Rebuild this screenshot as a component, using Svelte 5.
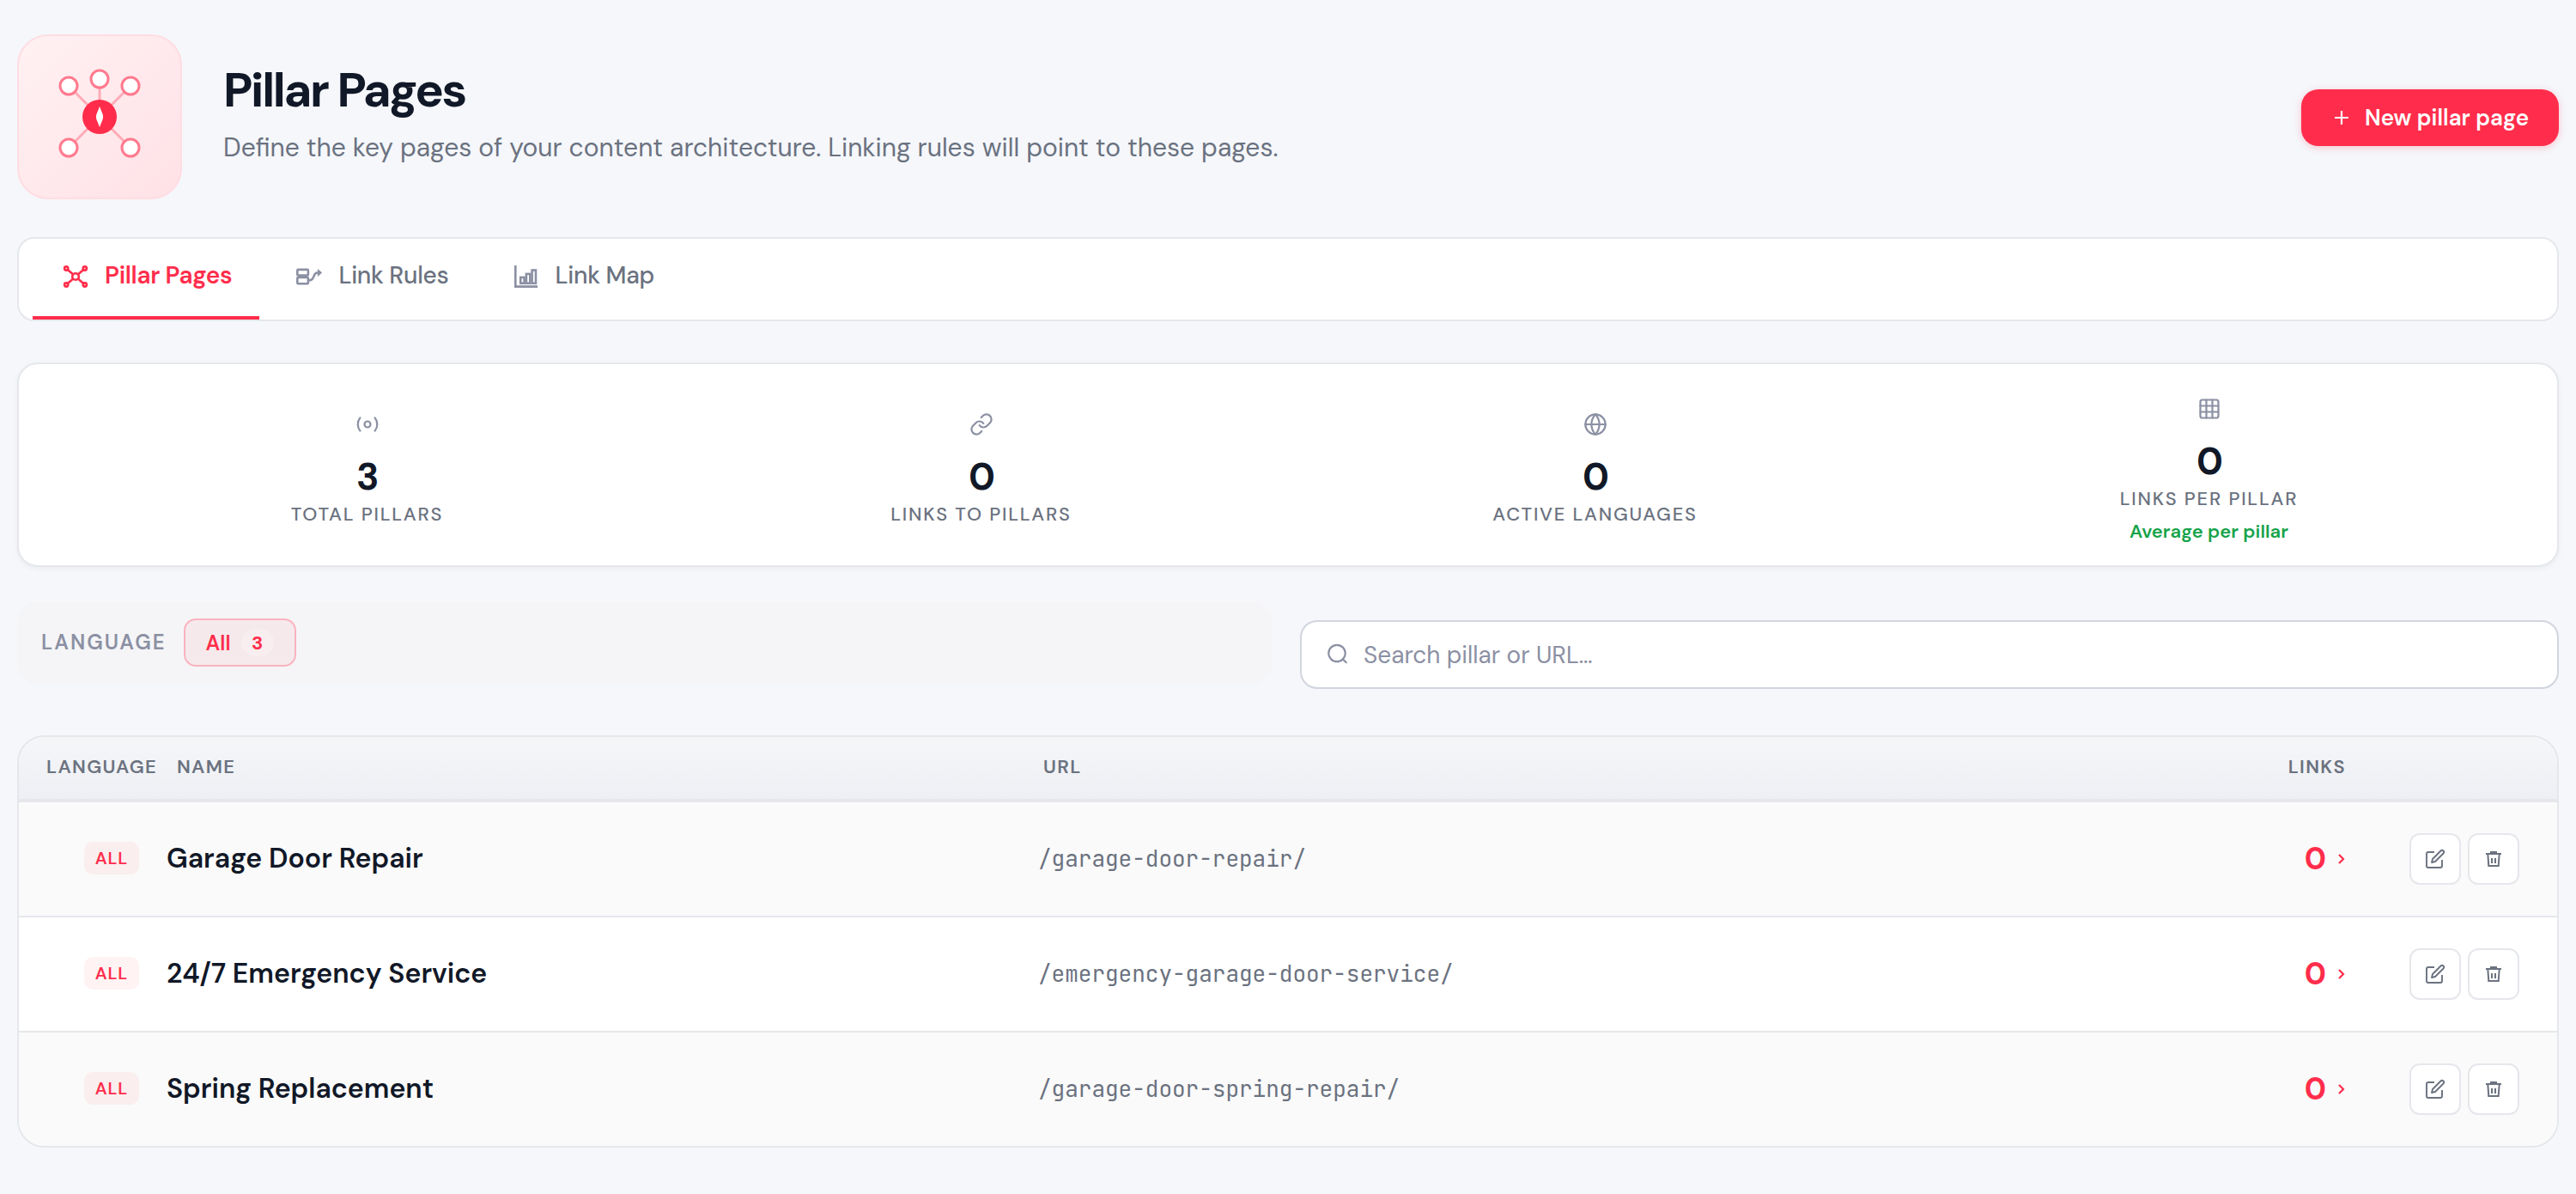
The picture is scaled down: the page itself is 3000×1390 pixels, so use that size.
<script>
  const tabs = [
    { label: 'Pillar Pages', icon: 'hub', active: true },
    { label: 'Link Rules', icon: 'rules', active: false },
    { label: 'Link Map', icon: 'chart', active: false }
  ];
  const stats = [
    { icon: 'radio', value: '3', label: 'Total pillars' },
    { icon: 'link', value: '0', label: 'Links to pillars' },
    { icon: 'globe', value: '0', label: 'Active languages' },
    { icon: 'grid', value: '0', label: 'Links per pillar', note: 'Average per pillar' }
  ];
  const rows = [
    { lang: 'ALL', name: 'Garage Door Repair', url: '/garage-door-repair/', links: 0 },
    { lang: 'ALL', name: '24/7 Emergency Service', url: '/emergency-garage-door-service/', links: 0 },
    { lang: 'ALL', name: 'Spring Replacement', url: '/garage-door-spring-repair/', links: 0 }
  ];
</script>

<main class="page">
  <header class="hero">
    <div class="hero-icon">
      <svg viewBox="2 2 188 188" fill="none">
        <g stroke="#ffabb7" stroke-width="3">
          <path d="M96 96V52M96 96L60 60M96 96l36-36M96 96l-36 36M96 96l36 36" />
        </g>
        <g fill="#fff" stroke="#ff7a8e" stroke-width="3">
          <circle cx="60" cy="60" r="10" />
          <circle cx="96" cy="52" r="10" />
          <circle cx="132" cy="60" r="10" />
          <circle cx="60" cy="132" r="10" />
          <circle cx="132" cy="132" r="10" />
        </g>
        <circle cx="96" cy="96" r="20" fill="#ff2d4b" />
        <path d="M96 84l3.400 8.600c.9 2.300.9 4.500 0 6.800L96 108l-3.400-8.600c-.9-2.300-.9-4.500 0-6.800z" fill="#fff" />
      </svg>
    </div>
    <div class="hero-text">
      <h1>Pillar Pages</h1>
      <p>Define the key pages of your content architecture. Linking rules will point to these pages.</p>
    </div>
    <button class="primary">
      <svg viewBox="0 0 24 24" fill="none" stroke="currentColor" stroke-width="2.4"><path d="M12 3.300v17.400M3.300 12h17.400" /></svg>
      <span>New pillar page</span>
    </button>
  </header>

  <nav class="tabs">
    {#each tabs as tab}
      <div class="tab" class:active={tab.active}>
        <svg viewBox="0 0 36 36" fill="none" stroke="currentColor" stroke-width="2.6">
          {#if tab.icon === 'hub'}
            <circle cx="18" cy="18" r="3.800" />
            <circle cx="7.200" cy="8.500" r="2.100" />
            <circle cx="28.800" cy="8.500" r="2.100" />
            <circle cx="7.200" cy="27.500" r="2.100" />
            <circle cx="28.800" cy="27.500" r="2.100" />
            <path d="M8.800 9.900l6.400 5.600M27.200 9.900l-6.400 5.600M8.800 26.100l6.400-5.600M27.200 26.100l-6.400-5.600" />
          {:else if tab.icon === 'rules'}
            <rect x="4.300" y="9.900" width="12.600" height="6.700" rx="1" />
            <rect x="4.300" y="19" width="12.600" height="7.300" rx="1" />
            <path d="M17 22.300h1.500c6.500 0 3.500-8.800 9-8.800h2" />
            <path d="M28.300 9.800l4.200 3.700-4.200 3.700z" fill="currentColor" stroke-width="1" />
          {:else}
            <path d="M5.300 5v24.600H31" />
            <rect x="11.200" y="18.900" width="4.400" height="6.900" />
            <rect x="17.900" y="14.900" width="4.400" height="10.900" />
            <rect x="24.600" y="10.500" width="4.400" height="15.300" />
          {/if}
        </svg>
        <span>{tab.label}</span>
      </div>
    {/each}
  </nav>

  <section class="stats">
    {#each stats as s}
      <div class="stat">
        <svg viewBox="0 0 24 24" fill="none" stroke="currentColor" stroke-width="1.9" stroke-linecap="round" stroke-linejoin="round">
          {#if s.icon === 'radio'}
            <circle cx="12" cy="12" r="3" />
            <path d="M4.600 18.500a10.500 10.500 0 0 1 0-13M19.400 5.500a10.500 10.500 0 0 1 0 13" />
          {:else if s.icon === 'link'}
            <path d="M10 13a5 5 0 0 0 7.540.540l3-3a5 5 0 0 0-7.070-7.070l-1.720 1.710" />
            <path d="M14 11a5 5 0 0 0-7.540-.540l-3 3a5 5 0 0 0 7.070 7.070l1.710-1.710" />
          {:else if s.icon === 'globe'}
            <circle cx="12" cy="12" r="10" />
            <path d="M2 12h20M12 2a15.300 15.300 0 0 1 4 10 15.300 15.300 0 0 1-4 10 15.300 15.300 0 0 1-4-10 15.300 15.300 0 0 1 4-10z" />
          {:else}
            <rect x="3" y="3" width="18" height="18" rx="2" />
            <path d="M3 9h18M3 15h18M9 3v18M15 3v18" />
          {/if}
        </svg>
        <strong>{s.value}</strong>
        <span class="stat-label">{s.label}</span>
        {#if s.note}<span class="note">{s.note}</span>{/if}
      </div>
    {/each}
  </section>

  <section class="filters">
    <div class="langs">
      <span class="langs-label">Language</span>
      <div class="chip"><span>All</span><span class="count">3</span></div>
    </div>
    <div class="search">
      <svg viewBox="0 0 28 28" fill="none" stroke="currentColor" stroke-width="2.200" stroke-linecap="round"><circle cx="13" cy="12.500" r="9.700" /><path d="M20 19.500l3.800 3.800" /></svg>
      <span>Search pillar or URL…</span>
    </div>
  </section>

  <section class="table">
    <div class="row head">
      <span class="h-lang">Language</span>
      <span class="h-name">Name</span>
      <span class="h-url">URL</span>
      <span class="h-links">Links</span>
      <span></span>
    </div>
    {#each rows as r}
      <div class="row body">
        <div class="c-lang"><span class="badge">{r.lang}</span></div>
        <div class="c-name">{r.name}</div>
        <div class="c-url">{r.url}</div>
        <div class="c-links">
          <b>{r.links}</b>
          <svg viewBox="0 0 8 12" fill="none" stroke="currentColor" stroke-width="2.200"><path d="M1 1l5 5-5 5" /></svg>
        </div>
        <div class="c-actions">
          <div class="icon-btn">
            <svg class="edit" viewBox="0 0 24 24" fill="none" stroke="currentColor" stroke-width="1.900" stroke-linejoin="round">
              <path d="M11 4H4a2 2 0 0 0-2 2v14a2 2 0 0 0 2 2h14a2 2 0 0 0 2-2v-7" />
              <path d="M18.500 2.500a2.120 2.120 0 0 1 3 3L12 15l-4 1 1-4z" />
            </svg>
          </div>
          <div class="icon-btn">
            <svg class="trash" viewBox="0 0 18 20" fill="none" stroke="currentColor" stroke-width="2">
              <path d="M0 4h18M5 2h8M2.300 4l1 14h11.400l1-14M7 9v6M11 9v6" />
            </svg>
          </div>
        </div>
      </div>
    {/each}
  </section>
</main>

<style>
  :global(body) { margin: 0; background: #f5f7fb; }
  :global(*) { box-sizing: border-box; }
  .page {
    min-height: 1390px;
    padding: 40px 20px 54px;
    background: #f5f7fb;
    color: #111827;
    font-family: 'DM Sans', Inter, sans-serif;
  }
  svg { display: block; flex: none; }

  .hero { display: flex; align-items: center; height: 192px; }
  .hero-icon {
    width: 192px; height: 192px; margin-right: 48px;
    border: 2px solid #ffdde2; border-radius: 36px;
    background: linear-gradient(135deg, #fff1f3, #ffe1e6);
  }
  .hero-icon svg { width: 188px; height: 188px; }
  .hero-text { flex: 1; padding-bottom: 3px; }
  h1 { margin: 0; font-size: 56px; line-height: 64px; font-weight: 700; letter-spacing: -0.041em; }
  .hero p { margin: 11px 0 0; font-size: 30px; line-height: 48px; color: #6b7280; }
  .primary {
    display: flex; align-items: center; gap: 16px;
    width: 300px; height: 66px; padding: 0 0 0 36px; margin-top: 2px;
    border: 0; border-radius: 20px; background: #ff2d4b; color: #fff;
    font: 600 26px 'DM Sans', Inter, sans-serif;
    box-shadow: 0 2px 8px rgba(255, 45, 75, 0.25);
  }
  .primary svg { width: 22px; height: 22px; }

  .tabs {
    display: flex; gap: 8px; height: 98px; margin-top: 44px; padding: 0 16px;
    border: 2px solid #e5e7eb; border-radius: 20px; background: #fff;
  }
  .tab {
    display: flex; align-items: center; gap: 16px; padding: 0 32px 2px;
    border-bottom: 4px solid transparent;
    font-size: 28px; font-weight: 500; letter-spacing: -0.01em; color: #6b7280;
  }
  .tab span { padding-bottom: 4px; }
  .tab svg { width: 36px; height: 36px; color: #8b90a3; }
  .tab.active { color: #ff2d4b; border-color: #ff2d4b; font-weight: 600; }
  .tab.active svg { color: #ff2d4b; }

  .stats {
    display: grid; grid-template-columns: repeat(4, 1fr); align-items: center;
    height: 238px; margin-top: 48px; padding: 0 48px;
    border: 2px solid #e5e7eb; border-radius: 24px; background: #fff;
    box-shadow: 0 2px 6px rgba(17, 24, 39, 0.05);
  }
  .stat { display: flex; flex-direction: column; align-items: center; }
  .stat svg { width: 28px; height: 28px; margin: 13px 0 23px; color: #8b90a3; }
  .stat strong { font-size: 44px; line-height: 48px; font-weight: 700; letter-spacing: -0.04em; }
  .stat-label {
    margin-top: 4px; font-size: 22px; line-height: 32px; font-weight: 500;
    letter-spacing: 0.08em; text-transform: uppercase; color: #6b7280;
  }
  .note { margin-top: 8px; font-size: 22px; line-height: 28px; font-weight: 600; color: #16a34a; }

  .filters { display: grid; grid-template-columns: 1462px 1fr; gap: 32px; align-items: start; margin-top: 40px; }
  .langs {
    display: flex; align-items: center; gap: 20px; height: 96px; padding: 0 28px;
    border-radius: 24px; background: #f5f5f7;
  }
  .langs-label {
    padding-bottom: 1px; font-size: 24px; font-weight: 600; letter-spacing: 0.085em;
    text-transform: uppercase; color: #8b90a3;
  }
  .chip {
    display: flex; align-items: center; gap: 12px; height: 56px; padding: 0 24px;
    border: 2px solid #fab3bf; border-radius: 14px; background: #f5e9ec;
    font-size: 24px; font-weight: 600; color: #ff2d4b;
  }
  .count {
    display: grid; place-items: center; min-width: 38px; height: 32px;
    border-radius: 20px; background: #f8edef; font-size: 22px; font-weight: 700;
  }
  .search {
    display: flex; align-items: center; gap: 16px; height: 80px; margin-top: 22px; padding: 0 28px;
    border: 2px solid #d1d5de; border-radius: 20px; background: #fff;
    font-size: 28px; color: #8b90a3;
  }
  .search svg { width: 28px; height: 28px; }

  .table { margin-top: 54px; border: 2px solid #e5e7eb; border-radius: 32px; background: #fff; overflow: hidden; }
  .row { display: grid; grid-template-columns: 160px 1017px 1fr 244px 236px; align-items: center; }
  .head {
    height: 76px; padding-bottom: 4px; border-bottom: 4px solid #e5e7eb;
    background: linear-gradient(#f5f6f8, #eeeff4);
    font-size: 22px; font-weight: 600; letter-spacing: 0.06em; text-transform: uppercase; color: #6b7280;
  }
  .h-lang { padding-left: 32px; }
  .h-name { padding-left: 24px; }
  .h-url { padding-left: 16px; }
  .h-links { padding-right: 10px; text-align: right; }
  .body { height: 134px; border-bottom: 2px solid #e5e7eb; }
  .body:last-child { height: 132px; border-bottom: 0; }
  .body:nth-child(even) { background: #fafafa; }
  .c-lang { display: flex; justify-content: flex-end; padding: 0 20px 2px 0; }
  .badge {
    display: grid; place-items: center; min-width: 64px; height: 38px; border-radius: 10px;
    background: rgba(255, 45, 75, 0.06); color: #ff2d4b;
    font-size: 20px; font-weight: 600; letter-spacing: 0.04em;
  }
  .c-name { padding: 0 0 2px 12px; font-size: 32px; font-weight: 600; }
  .c-url {
    padding: 0 0 2px 10px; color: #6b7280;
    font-family: 'JetBrains Mono', 'DejaVu Sans Mono', monospace; font-size: 26px;
  }
  .c-links { display: flex; align-items: center; justify-content: flex-end; gap: 14px; padding-right: 11px; color: #ff2d4b; }
  .c-links b { padding-bottom: 2px; font-size: 36px; font-weight: 700; }
  .c-links svg { width: 8px; height: 12px; }
  .c-actions { display: flex; justify-content: flex-end; gap: 8px; padding-right: 44px; }
  .icon-btn {
    display: grid; place-items: center; width: 60px; height: 60px;
    border: 2px solid #e5e7eb; border-radius: 12px; background: #fff; color: #6b7280;
  }
  .edit { width: 24px; height: 24px; }
  .trash { width: 18px; height: 20px; }
</style>
